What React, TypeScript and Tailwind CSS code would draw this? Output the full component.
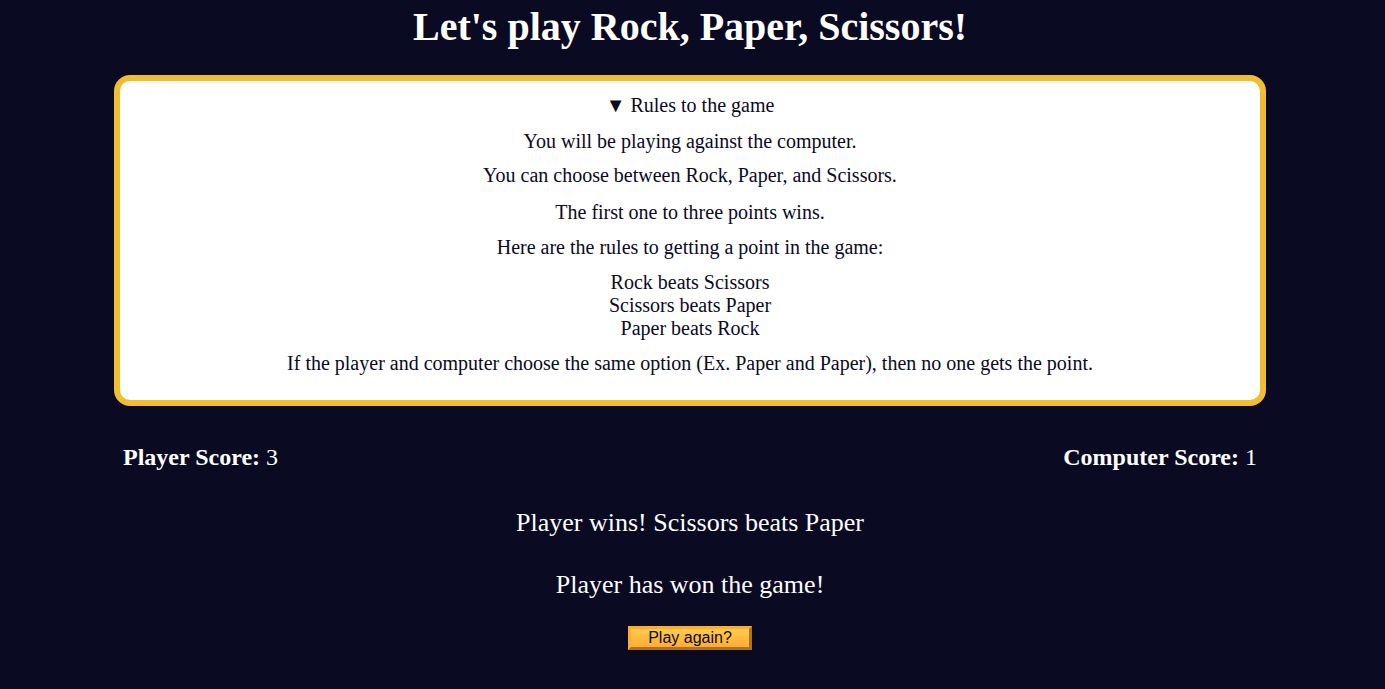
import React from 'react';

const App: React.FC = () => {
    return (
        <div className="min-h-[689px] bg-[#0a0a23] text-white pr-[5px]" style={{ fontFamily: '"Liberation Serif", "Times New Roman", serif' }}>
            {/* Title */}
            <h1 className="text-[40px] font-bold text-center leading-[46px] pt-[4px]">
                Let's play Rock, Paper, Scissors!
            </h1>

            {/* Rules box */}
            <div className="mx-auto mt-[25px] w-[1152px] bg-white border-[6px] border-[#f1be32] rounded-[16px] text-[#0a0a23] text-[20px] leading-[23px] text-center pt-[13px] pb-[13px]">
                <p className="mb-[13px]">▼ Rules to the game</p>
                <p className="mb-[11px]">You will be playing against the computer.</p>
                <p className="mb-[14px]">You can choose between Rock, Paper, and Scissors.</p>
                <p className="mb-[12px]">The first one to three points wins.</p>
                <p className="mb-[12px]">Here are the rules to getting a point in the game:</p>
                <p className="mb-[12px]">
                    Rock beats Scissors<br />
                    Scissors beats Paper<br />
                    Paper beats Rock
                </p>
                <p className="mb-[12px]">If the player and computer choose the same option (Ex. Paper and Paper), then no one gets the point.</p>
            </div>

            {/* Scores */}
            <div className="mx-auto w-[1152px] flex justify-between px-[9px] mt-[37px] text-[24px] leading-[28px]">
                <p><strong>Player Score:</strong> 3</p>
                <p><strong>Computer Score:</strong> 1</p>
            </div>

            {/* Results */}
            <div className="text-center text-[26px] leading-[30px]">
                <p className="mt-[37px]">Player wins! Scissors beats Paper</p>
                <p className="mt-[32px]">Player has won the game!</p>
                <button
                    className="mt-[26px] w-[124px] h-[24px] text-[16px] leading-none text-[#0a0a23] bg-[linear-gradient(#fecc4c,#ffac33)] border-[3px] border-[#feac32] [border-style:outset]"
                    style={{ fontFamily: '"Liberation Sans", Arial, sans-serif' }}
                >
                    Play again?
                </button>
            </div>
        </div>
    );
};

export default App;
